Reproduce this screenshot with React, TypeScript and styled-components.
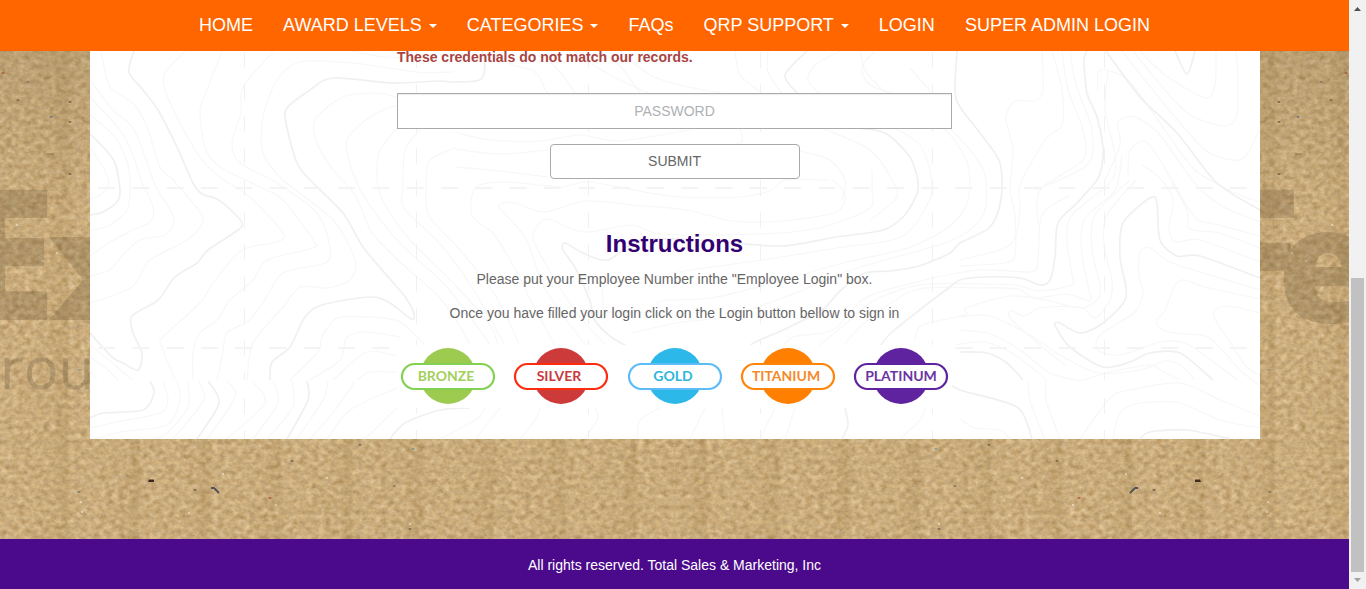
import React from "react";
import styled, { createGlobalStyle } from "styled-components";

const sans = '"Liberation Sans", Arial, Helvetica, sans-serif';

const GlobalStyle = createGlobalStyle`
  *, *::before, *::after { box-sizing: border-box; }
  body {
    margin: 0;
    font-family: ${sans};
    font-size: 14px;
    line-height: 20px;
    color: #666;
    background: #c8a877;
  }
`;

const Page = styled.div`
  display: flex;
  min-height: 100vh;
`;

const Content = styled.div`
  flex: 1;
  min-width: 0;
  display: flex;
  flex-direction: column;
`;

const NavBar = styled.nav`
  display: flex;
  flex-wrap: wrap;
  justify-content: center;
  background: #ff6600;
`;

const NavLink = styled.a`
  display: flex;
  align-items: center;
  gap: 7px;
  padding: 15px 15px 16px;
  font-size: 18px;
  line-height: 20px;
  color: #fff;
  text-decoration: none;
`;

const Caret = styled.span`
  border-top: 4px solid #fff;
  border-left: 4px solid transparent;
  border-right: 4px solid transparent;
  margin-top: 2px;
`;

/* Layers share a single grid cell, so artwork sits behind its content. */
const Layers = styled.div`
  display: grid;
  grid-template: minmax(0, 1fr) / minmax(0, 1fr);
  overflow: hidden;
  & > * { grid-area: 1 / 1; }
`;

const Stage = styled(Layers)`
  flex: 1;
`;

const Artwork = styled.svg`
  display: block;
  width: 100%;
  height: 100%;
  min-height: 0;
  contain: size;
`;

const Main = styled.main`
  padding-bottom: 100px;
`;

const Panel = styled(Layers)`
  max-width: 1170px;
  margin: 0 auto;
  background: #fff;
`;

const PanelBody = styled.div`
  width: 100%;
  max-width: 555px;
  margin: 0 auto;
  padding-bottom: 31px;
  display: flex;
  flex-direction: column;
  text-align: center;
`;

const LoginForm = styled.form`
  display: flex;
  flex-direction: column;
  align-items: center;
`;

const ErrorText = styled.strong`
  align-self: stretch;
  line-height: 12px;
  color: #a94442;
  text-align: left;
`;

const PasswordInput = styled.input`
  width: 100%;
  height: 36px;
  margin-top: 30px;
  padding: 6px 12px;
  border: 1px solid #aaa;
  border-radius: 0;
  background: #fff;
  box-shadow: inset 0 1px 1px rgba(0, 0, 0, 0.08);
  font: 14px/20px ${sans};
  color: #555;
  text-align: center;
  &::placeholder { color: #aeb1b4; opacity: 1; }
`;

const SubmitButton = styled.button`
  width: 250px;
  height: 35px;
  margin-top: 15px;
  padding: 6px 12px 7px;
  border: 1px solid #aaa;
  border-radius: 4px;
  background: #fff;
  font: 14px/20px ${sans};
  color: #666;
`;

const Heading = styled.h1`
  margin: 52px 0 12px;
  font-size: 24px;
  line-height: 26px;
  color: #330072;
`;

const Paragraph = styled.p`
  margin: 0 0 14px;
`;

const BadgeRow = styled.div`
  display: flex;
  justify-content: space-between;
  margin-top: 8px;
  background: #fff;
`;

const BadgeArt = styled.svg`
  display: block;
  width: 102px;
  height: 63px;
  min-width: 0;
`;

const Footer = styled.footer`
  padding: 16px 15px 14px;
  background: #4b0a8c;
  color: #fff;
  text-align: center;
`;

const ScrollRail = styled.div`
  position: sticky;
  top: 0;
  width: 17px;
  height: 100vh;
  display: flex;
  flex-direction: column;
  align-items: center;
  background: #f1f1f1;
`;

const ScrollArrow = styled.svg`
  display: block;
  width: 17px;
  height: 17px;
`;

const ScrollTrack = styled.div`
  flex: 1;
  display: flex;
  flex-direction: column;
  justify-content: flex-end;
`;

const ScrollThumb = styled.div`
  width: 13px;
  height: 53%;
  background: #c1c1c1;
`;

/* Smooth curve through a "x,y x,y" list of points. */
function curve(list: string): string {
  const p = list.trim().split(/\s+/).map((s) => s.split(",").map(Number));
  let d = `M${p[0][0]} ${p[0][1]}`;
  for (let i = 0; i < p.length - 1; i++) {
    const a = p[i - 1] || p[i];
    const b = p[i];
    const c = p[i + 1];
    const e = p[i + 2] || c;
    d += `C${b[0] + (c[0] - a[0]) / 7} ${b[1] + (c[1] - a[1]) / 7} ${c[0] - (e[0] - b[0]) / 7} ${c[1] - (e[1] - b[1]) / 7} ${c[0]} ${c[1]}`;
  }
  return d;
}

const majorContours = [
  "134,51 129,72 143,90 158,110 177,147 193,183 202,194 217,199 233,212 242,223 238,230 208,250 197,263 175,277 158,300 132,316 133,333 142,353 138,370 123,363 112,357 90,333",
  "90,134 103,147 115,163 120,190 117,202 103,212 90,215",
  "482,51 485,67 480,80 455,82 438,81 393,83 333,78 310,90 287,108 286,123 297,163 312,182 343,213 363,247 390,279 406,298 414,314 411,319 390,303 370,297 322,305 305,317 290,347 272,362 270,380",
  "918,180 917,194 904,216 883,230 836,237 779,246 700,240 640,240 608,260 583,253 565,243 563,250 576,269 590,301 594,319 611,337 636,351",
  "855,128 885,133 910,157 918,180",
  "957,51 955,90 960,107 983,137 1000,163 1001,199 990,227 960,243 950,253 919,266 890,271 865,273 840,291 822,310 783,330 752,344 755,352",
  "877,351 890,334 926,305 950,287 960,280 983,277 1020,278 1040,285 1050,280 1055,257 1058,223 1077,203 1097,180 1102,165 1103,147 1097,117 1087,93 1084,60 1087,51",
  "1106,51 1140,97 1177,133 1217,183 1260,210",
  "1175,51 1187,74 1195,51",
  "807,51 785,75 797,93",
  "1260,278 1200,256 1177,256 1160,240 1157,203 1150,198 1123,223 1120,257 1126,297 1103,323 1080,333 1060,323 1055,325 1070,347 1103,367 1130,362 1150,353 1180,353 1213,380",
  "960,352 987,353 1007,363 1023,380",
  "940,360 948,380 960,390 1017,407 1032,439",
  "1140,439 1150,432 1187,430 1230,439",
  "150,381 154,393 143,410 103,413 90,418",
  "208,381 219,403 197,439",
  "307,381 308,400 287,439",
  "390,439 405,423 440,410 470,408",
  "845,408 848,425 842,439",
];

const minorContours = [
  "101,51 110,87 133,103 147,127 160,167 173,180 200,212 202,224 187,240 150,260 138,280 130,288 107,298 90,303",
  "90,80 113,110 133,128 148,165 155,185 174,218 165,235 140,240 120,258 110,270 90,276",
  "90,97 120,130 133,155 141,180 153,207 150,222 133,230 110,242 90,256",
  "90,115 115,137 128,165 130,190 127,210 110,225 90,231",
  "90,148 103,167 109,183 100,195 90,199",
  "185,51 165,73 165,90 180,123 200,157 220,177 250,197 283,233 277,242 242,250 213,283 200,303 163,337 162,347 175,380",
  "222,51 207,90 200,110 205,147 220,167 260,187 283,200 313,240 313,248 267,260 253,280 230,300 217,320 200,333 193,353 193,380",
  "273,52 243,87 241,113 232,143 240,163 277,183 317,213 330,247 325,263 283,273 263,303 247,322 227,333 222,357 217,380",
  "453,72 417,72 353,63 300,62 277,80 263,117 263,153 283,180 333,220 355,260 350,280 327,288 300,287 283,307 253,343 247,380",
  "352,51 385,57 440,56 450,51",
  "397,97 377,93 343,97 315,120 317,143 333,170 355,195 372,233 400,262 440,298 462,330 470,345",
  "397,105 373,115 347,140 353,173 368,203 400,243 445,285 480,330 490,345",
  "397,128 379,153 378,187 388,210 410,240 455,285 490,325 498,345",
  "420,130 405,150 403,187 404,208 440,244 472,287 508,351",
  "455,148 430,160 426,185 429,216 461,251 497,298 522,351",
  "830,180 785,180 772,190 740,197 670,196 590,182 561,187 508,182 476,187 472,216 494,234 515,269 533,305 558,351",
  "833,180 845,194 836,212 783,221 733,221 686,210 633,205 586,201 544,212 515,203 499,207 525,237 544,287 569,323 590,351",
  "872,170 872,190 869,209 819,228 761,234 661,234 633,225 583,232 547,219 533,237 547,266 576,312 611,351",
  "604,310 604,287 633,280 697,269 769,259 836,248 901,237 929,201 931,175 920,145 895,128",
  "606,312 647,312 661,301 711,298 769,284 847,262 908,248 950,226 968,200 968,165 952,137 935,120",
  "633,333 676,323 729,316 793,294 854,269 950,241 983,215 985,175 970,150 950,128",
  "780,351 793,337 833,330 865,298 925,280 980,270 1030,272 1038,262 1042,215 1070,195",
  "812,351 843,326 875,300 920,285 980,284 1015,285 1040,291 1072,285 1072,275 1067,240 1072,215 1112,180 1114,150 1105,110 1108,70",
  "840,351 862,325 915,290 985,288 1018,289 1035,298 1066,294 1090,301 1089,290 1082,255 1084,220 1115,190 1122,155",
  "915,340 922,325 965,315 966,308 1010,296 1045,300 1080,308 1097,300 1100,285 1092,250 1095,215 1130,180",
  "960,330 990,334 1020,350 1050,373 1080,381",
  "1080,381 1110,372 1150,365 1160,370 1180,380",
  "960,317 990,316 1030,335 1060,355 1098,373 1140,370 1165,361 1180,365 1195,380",
  "955,345 985,342 1015,355 1047,380",
  "1011,310 1010,318 1040,345 1065,365",
  "1011,310 1025,316 1040,308 1080,307 1095,318 1110,300 1112,280 1104,245 1107,215 1136,180",
  "1260,262 1200,240 1175,242 1169,228 1173,200 1160,178 1142,165",
  "1260,248 1220,233 1190,229 1187,210 1172,183",
  "1260,236 1215,224 1198,220 1185,203 1160,160 1145,141 1130,150 1128,175",
  "1260,222 1220,205 1192,180 1160,135 1135,117 1118,122 1120,145 1105,180",
  "1260,290 1210,275 1170,262 1150,248 1140,252 1139,275 1143,293 1135,312 1100,335 1098,350 1120,355 1160,342 1185,343 1215,363 1238,380",
  "1260,299 1205,287 1185,280 1175,285 1165,310 1156,322 1165,331 1185,334 1210,338 1240,370 1260,386",
  "1260,313 1235,307 1218,308 1214,317 1230,342 1245,365 1260,376",
  "1042,51 1043,90 1035,101 1015,101 1006,118 1013,150 1010,190 1015,215 1015,255 1005,263 960,266",
  "1052,51 1062,90 1062,125 1045,140 1020,185 1020,210 1010,245 960,260",
  "1062,51 1068,90 1083,130 1083,160 1040,190 1038,225",
  "1070,51 1076,85 1092,130 1087,165 1035,190",
  "1122,51 1165,105 1205,150 1232,160 1246,156 1260,128",
  "1133,51 1165,90 1190,115 1225,126 1237,115 1238,80 1236,51",
  "1140,51 1165,75 1205,98 1215,85 1216,51",
  "1098,90 1098,72 1110,71 1130,82 1165,130 1195,170 1235,193 1260,202",
  "910,68 925,85 933,95",
  "860,51 866,72 888,95",
  "840,51 815,65 808,80 820,94",
  "875,51 862,67 870,85 900,95",
  "735,51 740,75 762,93",
  "768,51 768,72 783,95",
  "600,51 622,68 640,93",
  "575,51 590,63 620,80 650,94",
  "498,51 510,64 535,72 547,93",
  "518,51 545,58 560,72 575,93",
  "620,51 650,75 680,85 725,94",
  "455,132 490,140 540,141 580,135 620,141 690,130",
  "455,149 500,154 548,150",
  "455,167 500,171 548,177",
  "740,128 742,141 730,149 800,151",
  "800,151 830,160 845,180 842,200",
  "822,128 870,150 895,185 895,200 870,220",
  "290,380 318,352 322,337 337,318 367,317 400,322 425,345",
  "310,380 340,360 347,337 367,332 400,337",
  "333,380 367,352 400,357",
  "357,380 370,372 397,372",
  "90,345 115,365 132,380",
  "90,357 108,370 118,380",
  "90,371 97,380",
  "163,381 168,400 160,413 117,422 90,428",
  "177,381 180,400 167,425 120,432 95,439",
  "188,381 188,407 167,433 153,439",
  "198,381 204,400 173,439",
  "227,381 235,397 207,439",
  "252,381 265,403 227,439",
  "273,381 278,403 253,439",
  "292,381 293,407 267,439",
  "328,381 323,400 297,439",
  "355,381 335,410 310,439",
  "397,388 350,410 327,439",
  "365,439 397,408",
  "440,439 475,420 485,408",
  "476,439 490,420 500,408",
  "520,439 535,420 540,408",
  "585,439 598,418 595,408",
  "637,439 640,420 660,408",
  "690,439 705,408",
  "725,439 722,408",
  "760,439 775,408",
  "785,439 795,408",
  "900,439 920,420 925,408",
  "960,419 975,428 1000,430 1010,439",
  "1028,381 1030,400 1037,420 1045,439",
  "1046,381 1046,400 1060,439",
  "1080,439 1110,398 1130,390 1180,383 1220,400 1260,416",
  "1113,439 1120,413 1140,403 1180,403 1220,420 1260,428",
];

const gridColumns = [244, 416, 588, 760, 932, 1104];

function Contours() {
  return (
    <Artwork viewBox="90 51 1170 388" preserveAspectRatio="xMidYMin slice" aria-hidden="true">
      <g fill="none" stroke="#f7f7f7" strokeWidth="1.2">
        {minorContours.map((c) => <path key={c} d={curve(c)} />)}
      </g>
      <g fill="none" stroke="#f0f0f0" strokeWidth="1.7">
        {majorContours.map((c) => <path key={c} d={curve(c)} />)}
      </g>
      <g stroke="#f1f1f1" strokeWidth="1">
        {gridColumns.map((x) => (
          <React.Fragment key={x}>
            <path d={`M${x + 0.5} 52V380`} strokeDasharray="16 16" />
            <path d={`M${x + 0.5} 398V439`} strokeDasharray="16 16" />
          </React.Fragment>
        ))}
        <path d="M98 188H1260M98 348H1260" stroke="#f4f4f4" strokeWidth="2" strokeDasharray="17 17.3" />
      </g>
    </Artwork>
  );
}

const specks: [number, number, string][] = [
  [51, 117, "#5a6f96"], [70, 102, "#6d4c2c"], [70, 122, "#6d4c2c"], [70, 174, "#6d4c2c"],
  [18, 100, "#7a5634"], [3, 73, "#a0522d"], [28, 82, "#77736c"], [79, 492, "#6b6a5c"],
  [195, 490, "#5b5448"], [360, 445, "#5d6058"], [394, 486, "#6e6455"], [410, 529, "#5d584e"],
  [270, 498, "#b8402c"], [413, 449, "#5f9a9a"], [292, 461, "#6a4a2b"], [80, 370, "#7e9ba0"],
];
const flecks = [[81, 502], [82, 512], [189, 513], [276, 505], [327, 478], [410, 524], [223, 474], [57, 253], [43, 261], [17, 225]];

function CardboardHalf() {
  return (
    <g>
      <rect x="0" y="51" width="675" height="488" filter="url(#grain)" />
      {specks.map(([x, y, c]) => <ellipse key={`${x}-${y}`} cx={x} cy={y} rx="1.6" ry="1.1" fill={c} opacity="0.7" />)}
      {flecks.map(([x, y]) => <circle key={`${x}-${y}`} cx={x} cy={y} r="1.1" fill="#efe6d4" opacity="0.8" />)}
      <path d="M149 479.500h5v2.500h-6z" fill="#3a2420" />
      <path d="M211 488h3l5 5" fill="none" stroke="#50545a" strokeWidth="2" />
      <path d="M47 154h7" stroke="#7c4a2a" opacity="0.7" />
    </g>
  );
}

function Cardboard() {
  return (
    <Artwork viewBox="0 51 1349 488" preserveAspectRatio="xMidYMin slice" aria-hidden="true">
      <defs>
        <filter id="grain" x="0" y="0" width="1" height="1" colorInterpolationFilters="sRGB">
          <feTurbulence type="fractalNoise" baseFrequency="0.16 0.2" numOctaves="4" seed="7" />
          <feColorMatrix values="0.26 0.08 0 0 0.626  0.27 0.12 0 0 0.483  0.26 0.18 0 0 0.272  0 0 0 0 1" />
        </filter>
        <linearGradient id="flute" x1="0" x2="1" y1="0" y2="0">
          <stop offset="0" stopColor="#7a5a20" stopOpacity="0" />
          <stop offset="0.7" stopColor="#7a5a20" stopOpacity="0.03" />
          <stop offset="0.93" stopColor="#7a5a20" stopOpacity="0.12" />
          <stop offset="1" stopColor="#7a5a20" stopOpacity="0" />
        </linearGradient>
        <pattern id="flutes" width="71" height="488" patternUnits="userSpaceOnUse">
          <rect width="71" height="488" fill="url(#flute)" />
        </pattern>
        <linearGradient id="shade" x1="0" x2="0" y1="0" y2="1">
          <stop offset="0" stopColor="#6b5a3a" stopOpacity="0.16" />
          <stop offset="0.35" stopColor="#6b5a3a" stopOpacity="0" />
        </linearGradient>
      </defs>
      <CardboardHalf />
      <g transform="translate(1349 0) scale(-1 1)"><CardboardHalf /></g>
      <rect x="0" y="51" width="1349" height="488" fill="url(#flutes)" />
      <rect x="0" y="51" width="1349" height="488" fill="url(#shade)" />
      <g fill="#6e5a38" opacity="0.28" fontFamily='"Open Sans", sans-serif' fontWeight="800">
        <text x="-44" y="320" fontSize="182">E</text>
        <text x="1203" y="320" fontSize="182">F</text>
        <text x="1277" y="322" fontSize="160">e</text>
        <path d="M49 237H90V320H49L83 280z" />
      </g>
      <g fill="#7b6647" fillOpacity="0.36" fontFamily='"Open Sans", sans-serif' fontSize="58">
        <text x="0" y="389">rou</text>
      </g>
    </Artwork>
  );
}

const levels = [
  { name: "BRONZE", fill: "#9ccb50", ring: "#83d152", text: "#a3cf5c", at: 49 },
  { name: "SILVER", fill: "#cc3a3a", ring: "#fb2c10", text: "#c93a3f", at: 49 },
  { name: "GOLD", fill: "#2cb8e8", ring: "#5cbcf8", text: "#2fb5dd", at: 49 },
  { name: "TITANIUM", fill: "#ff7f00", ring: "#ff8408", text: "#f58a2c", at: 49 },
  { name: "PLATINUM", fill: "#5f239f", ring: "#5f239f", text: "#6a35a2", at: 51 },
];

function Badge({ name, fill, ring, text, at }: (typeof levels)[number]) {
  return (
    <BadgeArt viewBox="0 0 102 63" role="img" aria-label={name}>
      <circle cx="51" cy="31" r="28" fill={fill} />
      <rect x="5" y="19" width="92" height="25" rx="12.5" fill="#fff" stroke={ring} strokeWidth="2.2" />
      <text x={at} y="36" textAnchor="middle" fontFamily="Lato, sans-serif" fontSize="14" fontWeight="700" fill={text}>
        {name}
      </text>
    </BadgeArt>
  );
}

const navItems = [
  { label: "HOME" },
  { label: "AWARD LEVELS", menu: true },
  { label: "CATEGORIES", menu: true },
  { label: "FAQs" },
  { label: "QRP SUPPORT", menu: true },
  { label: "LOGIN" },
  { label: "SUPER ADMIN LOGIN" },
];

export default function App() {
  return (
    <Page>
      <GlobalStyle />
      <Content>
        <NavBar>
          {navItems.map((item) => (
            <NavLink key={item.label} href="#">
              {item.label}
              {item.menu && <Caret />}
            </NavLink>
          ))}
        </NavBar>
        <Stage>
          <Cardboard />
          <Main>
            <Panel>
              <Contours />
              <PanelBody>
                <LoginForm onSubmit={(e) => e.preventDefault()}>
                  <ErrorText role="alert">These credentials do not match our records.</ErrorText>
                  <PasswordInput type="password" placeholder="PASSWORD" aria-label="Password" />
                  <SubmitButton type="submit">SUBMIT</SubmitButton>
                </LoginForm>
                <Heading>Instructions</Heading>
                <Paragraph>Please put your Employee Number inthe "Employee Login" box.</Paragraph>
                <Paragraph>Once you have filled your login click on the Login button bellow to sign in</Paragraph>
                <BadgeRow>
                  {levels.map((level) => <Badge key={level.name} {...level} />)}
                </BadgeRow>
              </PanelBody>
            </Panel>
          </Main>
        </Stage>
        <Footer>All rights reserved. Total Sales &amp; Marketing, Inc</Footer>
      </Content>
      <ScrollRail aria-hidden="true">
        <ScrollArrow viewBox="0 0 17 17"><path d="M5 11h7L8.5 7z" fill="#505050" /></ScrollArrow>
        <ScrollTrack><ScrollThumb /></ScrollTrack>
        <ScrollArrow viewBox="0 0 17 17"><path d="M5 6h7l-3.500 4z" fill="#a3a3a3" /></ScrollArrow>
      </ScrollRail>
    </Page>
  );
}
